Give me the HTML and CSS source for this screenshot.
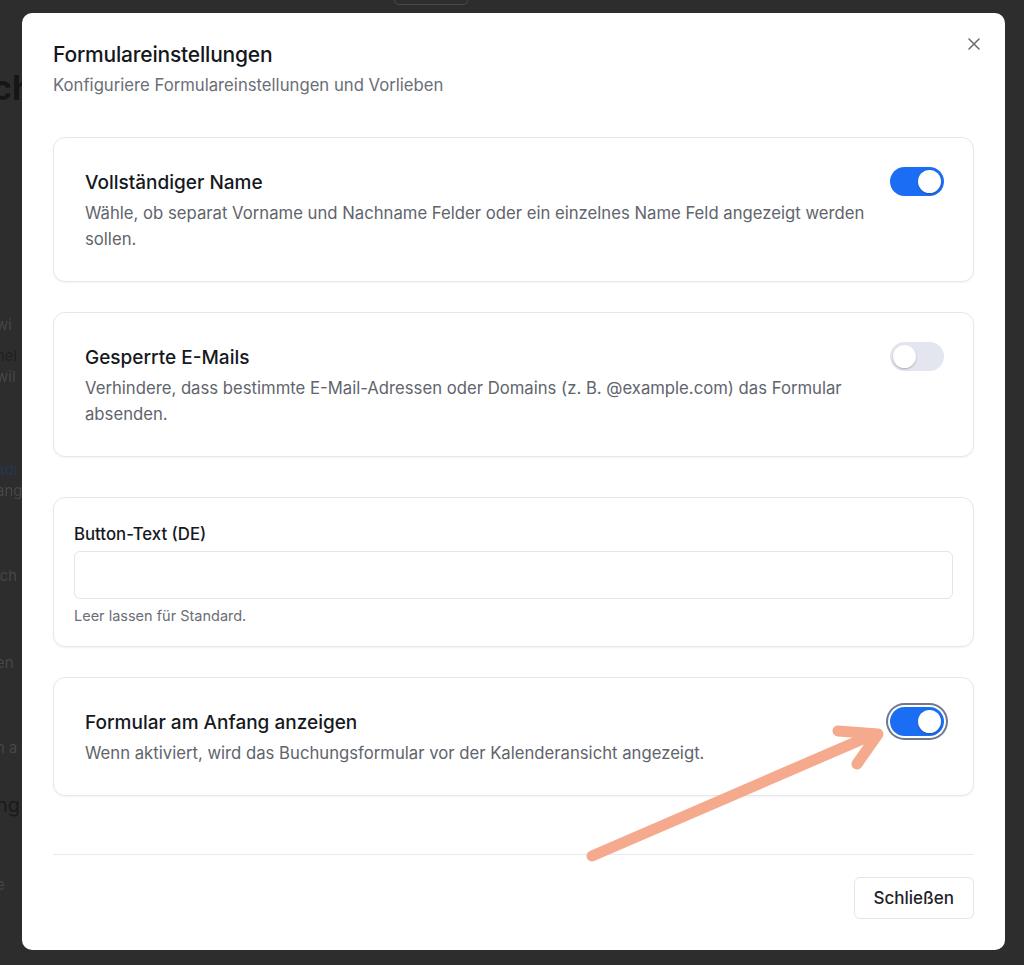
FILE: index.html
```html
<!DOCTYPE html>
<html lang="de">
<head>
  <meta charset="UTF-8">
  <meta name="viewport" content="width=device-width, initial-scale=1.0">
  <title>Formulareinstellungen</title>
  <link rel="stylesheet" href="styles.css">
</head>
<body>
  <div class="page">
    <div class="page-top"></div>
    <div class="page-col">
      <div class="bg-title">ch</div>
      <div class="bg-line l1">wi</div>
      <div class="bg-line l2">nel</div>
      <div class="bg-line l3">wil</div>
      <div class="bg-line l4 link">adı</div>
      <div class="bg-line l5">ang</div>
      <div class="bg-line l6">ich</div>
      <div class="bg-line l7">en</div>
      <div class="bg-line l8">n a</div>
      <div class="bg-line l9 big">ng</div>
      <div class="bg-line l10">e</div>
    </div>
  </div>

  <div class="overlay">
    <div class="modal">
      <button class="close" aria-label="Schließen">
        <svg width="14" height="14" viewBox="0 0 14 14"><path d="M2 2 L12 12 M12 2 L2 12" stroke="#6b6f76" stroke-width="1.6" stroke-linecap="round"/></svg>
      </button>

      <div class="modal-header">
        <h2>Formulareinstellungen</h2>
        <p>Konfiguriere Formulareinstellungen und Vorlieben</p>
      </div>

      <div class="settings">
        <div class="card row">
          <div class="card-text">
            <h3>Vollständiger Name</h3>
            <p>Wähle, ob separat Vorname und Nachname Felder oder ein einzelnes Name Feld angezeigt werden sollen.</p>
          </div>
          <span class="toggle on"><span class="knob"></span></span>
        </div>

        <div class="card row">
          <div class="card-text">
            <h3>Gesperrte E-Mails</h3>
            <p>Verhindere, dass bestimmte E-Mail-Adressen oder Domains (z. B. @example.com) das Formular absenden.</p>
          </div>
          <span class="toggle"><span class="knob"></span></span>
        </div>

        <div class="card field-card">
          <label for="btn-text">Button-Text (DE)</label>
          <input id="btn-text" type="text">
          <small>Leer lassen für Standard.</small>
        </div>

        <div class="card row">
          <div class="card-text">
            <h3>Formular am Anfang anzeigen</h3>
            <p>Wenn aktiviert, wird das Buchungsformular vor der Kalenderansicht angezeigt.</p>
          </div>
          <span class="toggle on focus"><span class="knob"></span></span>
        </div>
      </div>

      <div class="modal-footer">
        <button class="btn">Schließen</button>
      </div>
    </div>

    <svg class="arrow" width="1024" height="965" viewBox="0 0 1024 965">
      <path d="M592 856 L872 735" stroke="#f5a98d" stroke-width="11" stroke-linecap="round" fill="none"/>
      <path d="M838 731 L878 734 L857 764" stroke="#f5a98d" stroke-width="11" stroke-linecap="round" stroke-linejoin="round" fill="none"/>
    </svg>
  </div>
</body>
</html>
```

FILE: styles.css
```css
* {
  margin: 0;
  padding: 0;
  box-sizing: border-box;
}

body {
  width: 1024px;
  height: 965px;
  overflow: hidden;
  background: #2d2d2d;
  font-family: Inter, "Noto Sans", sans-serif;
  color: #1f2328;
}

/* page behind the dialog */
.page {
  height: 100%;
  filter: blur(0.6px);
}

.page-top {
  margin-left: 394px;
  width: 74px;
  height: 5px;
  border: 1px solid #4a4a4a;
  border-top: none;
  border-radius: 0 0 6px 6px;
}

.page-col {
  color: #1c1c1c;
}

.bg-title {
  margin-top: 62px;
  margin-left: -8px;
  font-size: 34px;
  font-weight: 700;
  color: #161616;
}

.bg-line {
  font-size: 15px;
  color: #474747;
  margin-left: -4px;
}

.bg-line.l1 { margin-top: 207px; }
.bg-line.l2 { margin-top: 12px; color: #202020; }
.bg-line.l3 { margin-top: 2px; }
.bg-line.l4 { margin-top: 74px; }
.bg-line.l5 { margin-top: 2px; }
.bg-line.l6 { margin-top: 66px; }
.bg-line.l7 { margin-top: 68px; }
.bg-line.l8 { margin-top: 66px; }
.bg-line.l9 { margin-top: 36px; font-size: 20px; color: #1a1a1a; }
.bg-line.l10 { margin-top: 58px; }

.link {
  color: #2a3550;
}

/* dialog */
.overlay {
  position: fixed;
  inset: 0;
  display: flex;
  align-items: center;
  justify-content: center;
}

.modal {
  position: relative;
  width: 983px;
  height: 937px;
  margin-left: 3px;
  margin-top: -3px;
  background: #fff;
  border-radius: 10px;
  padding: 30px 31px 31px;
  display: flex;
  flex-direction: column;
}

.close {
  position: absolute;
  top: 23px;
  right: 23px;
  width: 16px;
  height: 16px;
  border: none;
  background: none;
  display: flex;
  align-items: center;
  justify-content: center;
  cursor: pointer;
}

.modal-header h2 {
  font-size: 21px;
  font-weight: 500;
  line-height: 24px;
  color: #14171c;
  letter-spacing: -0.2px;
}

.modal-header p {
  margin-top: 8px;
  font-size: 16.7px;
  line-height: 20px;
  color: #6a6e76;
}

.settings {
  margin-top: 42px;
  display: flex;
  flex-direction: column;
}

.card {
  border: 1px solid #e6e7ea;
  border-radius: 12px;
  box-shadow: 0 1px 2px rgba(0, 0, 0, 0.05);
  background: #fff;
}

.card + .card {
  margin-top: 30px;
}

.card.field-card {
  margin-top: 40px;
}

.row {
  display: flex;
  align-items: flex-start;
  justify-content: space-between;
  gap: 24px;
  padding: 32px 29px 29px 31px;
}

.card-text h3 {
  font-size: 19px;
  font-weight: 500;
  line-height: 26px;
  color: #16191e;
}

.card-text p {
  margin-top: 4px;
  font-size: 16.7px;
  line-height: 26px;
  color: #60646c;
}

.toggle {
  flex-shrink: 0;
  position: relative;
  width: 54px;
  height: 29px;
  border-radius: 15px;
  background: #e3e6ee;
  margin-top: -3px;
}

.toggle .knob {
  position: absolute;
  top: 3px;
  left: 3px;
  width: 23px;
  height: 23px;
  border-radius: 50%;
  background: #fff;
  box-shadow: 0 1px 2px rgba(0, 0, 0, 0.25);
}

.toggle.on {
  background: #1b6ef3;
}

.toggle.on .knob {
  left: 28px;
}

.toggle.focus {
  box-shadow: 0 0 0 2px #fff, 0 0 0 4px #6f7890;
}

.field-card {
  padding: 25px 20px 21px;
  display: flex;
  flex-direction: column;
}

.field-card label {
  font-size: 16.8px;
  font-weight: 500;
  line-height: 22px;
  color: #16191e;
}

.field-card input {
  margin-top: 6px;
  height: 48px;
  border: 1px solid #e3e5e8;
  border-radius: 6px;
  padding: 0 12px;
  font-size: 16px;
  font-family: inherit;
}

.field-card small {
  margin-top: 8px;
  font-size: 14.5px;
  line-height: 18px;
  color: #6a6e76;
}

.modal-footer {
  margin-top: auto;
  border-top: 1px solid #e9eaec;
  padding-top: 22px;
  display: flex;
  justify-content: flex-end;
}

.btn {
  height: 42px;
  padding: 0 19px;
  border: 1px solid #e3e5e8;
  border-radius: 6px;
  background: #fff;
  font-family: inherit;
  font-size: 17px;
  font-weight: 500;
  color: #1f2328;
  cursor: pointer;
}

.arrow {
  position: absolute;
  top: 0;
  left: 0;
  pointer-events: none;
}
```
